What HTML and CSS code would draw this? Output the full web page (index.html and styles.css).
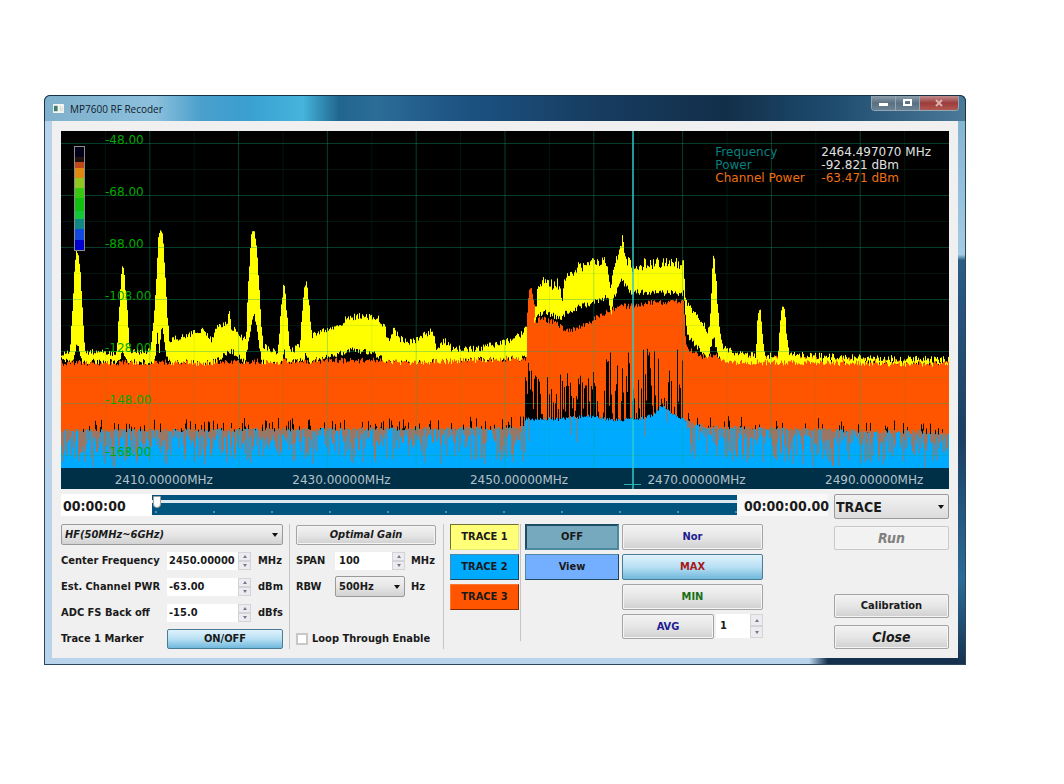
FILE: index.html
```html
<!DOCTYPE html>
<html lang="en">
<head>
	<meta charset="UTF-8">
	<title>MP7600 RF Recoder</title>
	<link rel="stylesheet" href="styles.css">
</head>
<body>
	<div class="window">
		<div class="titlebar">
			<svg class="app-icon" viewBox="0 0 12 10"><rect width="12" height="10" fill="#f4f6f2"/><rect x="1" y="2" width="4" height="6" fill="#3f7d6a"/><path d="M8 2v6M10 4v4" stroke="#c9d3c4"/></svg>
			<h1>MP7600 RF Recoder</h1>
			<div class="win-btns">
				<button type="button" aria-label="Minimize"><svg viewBox="0 0 12 10"><rect x="1" y="5" width="9" height="3" fill="#fff"/></svg></button>
				<button type="button" aria-label="Maximize"><svg viewBox="0 0 12 10"><rect x="2" y="2" width="7" height="5" fill="none" stroke="#fff" stroke-width="2"/></svg></button>
				<button type="button" class="win-close" aria-label="Close window"><svg viewBox="0 0 12 10"><path d="M3 2l6 6M9 2l-6 6" stroke="#e0b0b0" stroke-width="2"/></svg></button>
			</div>
		</div>

		<div class="client">
			<div class="plot">
				<svg class="spectrum" viewBox="0 0 888 337" preserveAspectRatio="none">
					<path id="orange" stroke="#ff5500"/>
					<path id="yellow" stroke="#ffff00"/>
					<path id="blue" stroke="#00aaff"/>
					<path id="mix" stroke="#ff5500" stroke-opacity=".6"/>
					<path id="minor" stroke="#00a060" stroke-opacity=".13"/>
					<path id="major" stroke="#10a878" stroke-opacity=".36"/>
				</svg>
				<ul class="axis-x">
					<li>2410.00000MHz</li>
					<li>2430.00000MHz</li>
					<li>2450.00000MHz</li>
					<li>2470.00000MHz</li>
					<li>2490.00000MHz</li>
				</ul>
				<ul class="axis-y">
					<li>-48.00</li>
					<li>-68.00</li>
					<li>-88.00</li>
					<li>-108.00</li>
					<li>-128.00</li>
					<li>-148.00</li>
					<li>-168.00</li>
				</ul>
				<div class="scale"></div>
				<div class="marker"></div>
				<dl class="readout">
					<dt>Frequency</dt><dd>2464.497070 MHz</dd>
					<dt>Power</dt><dd>-92.821 dBm</dd>
					<dt class="chp">Channel Power</dt><dd class="chp">-63.471 dBm</dd>
				</dl>
			</div>

			<div class="timeline">
				<span class="time">00:00:00</span>
				<input class="seek" type="range" min="0" max="100" value="0" aria-label="Position">
				<span class="time total">00:00:00.00</span>
				<div class="select big">
					<select aria-label="Mode"><option>TRACE</option></select>
				</div>
			</div>

			<div class="controls">
				<div class="panel input-panel">
					<div class="select full italic">
						<select aria-label="Input"><option>HF(50MHz~6GHz)</option></select>
					</div>
					<label for="cf">Center Frequency</label>
					<div class="spin"><input id="cf" type="number" step="any" value="2450.00000"><button type="button" aria-label="Up"></button><button type="button" class="down" aria-label="Down"></button></div>
					<span>MHz</span>
					<label for="pwr">Est. Channel PWR</label>
					<div class="spin"><input id="pwr" type="number" step="any" value="-63.00"><button type="button" aria-label="Up"></button><button type="button" class="down" aria-label="Down"></button></div>
					<span>dBm</span>
					<label for="adc">ADC FS Back off</label>
					<div class="spin"><input id="adc" type="number" step="any" value="-15.0"><button type="button" aria-label="Up"></button><button type="button" class="down" aria-label="Down"></button></div>
					<span>dBfs</span>
					<label for="mk">Trace 1 Marker</label>
					<button type="button" id="mk" class="btn on wide">ON/OFF</button>
				</div>

				<div class="panel span-panel">
					<button type="button" class="btn full italic">Optimal Gain</button>
					<label for="span">SPAN</label>
					<div class="spin"><input id="span" type="number" value="100"><button type="button" aria-label="Up"></button><button type="button" class="down" aria-label="Down"></button></div>
					<span>MHz</span>
					<label for="rbw">RBW</label>
					<div class="select">
						<select id="rbw"><option>500Hz</option></select>
					</div>
					<span>Hz</span>
					<label class="check"><input type="checkbox">Loop Through Enable</label>
				</div>

				<div class="panel trace-panel">
					<button type="button" class="flat t1">TRACE 1</button>
					<button type="button" class="flat t2">TRACE 2</button>
					<button type="button" class="flat t3">TRACE 3</button>
				</div>

				<div class="panel view-panel">
					<button type="button" class="flat off">OFF</button>
					<button type="button" class="flat view">View</button>
				</div>

				<div class="panel mode-panel">
					<button type="button" class="btn navy">Nor</button>
					<button type="button" class="btn on red">MAX</button>
					<button type="button" class="btn green">MIN</button>
					<div class="avg">
						<button type="button" class="btn navy">AVG</button>
						<div class="spin"><input type="number" value="1" aria-label="Average count"><button type="button" aria-label="Up"></button><button type="button" class="down" aria-label="Down"></button></div>
					</div>
				</div>

				<div class="panel action-panel">
					<button type="button" class="btn italic large" disabled>Run</button>
					<button type="button" class="btn calib">Calibration</button>
					<button type="button" class="btn italic large">Close</button>
				</div>
			</div>
		</div>
	</div>

	<script src="spectrum.js"></script>
</body>
</html>
```
FILE: styles.css
```css
*{
	padding: 0;
	margin: 0;
	box-sizing: border-box;
}
body {
	padding: 95px 98px 119px 44px;
	background: #fff;
	font: bold 11px/18px "DejaVu Sans Condensed", "DejaVu Sans", sans-serif;
	color: #1a1a1a;
}
ul {
	list-style: none;
}
button, input, select {
	font: inherit;
	color: inherit;
	min-width: 0;
}
.window {
	padding: 0 8px 7px 8px;
	border-radius: 6px 6px 0 0;
	background:
		linear-gradient(#7fb0d0 0, #a4cce4 28%, #2c5c84 29%, #1c3f63 60%, #2c6c98 85%, #16314e 100%) right / 8px 100% no-repeat,
		linear-gradient(90deg, #b9d4ea 0, #b9d4ea 83%, #16314e 85%, #16314e 100%);
	box-shadow: inset 0 0 0 1px #29475f;
}
.titlebar {
	display: flex;
	align-items: center;
	height: 26px;
	margin: 0 -8px;
	padding: 0 6px 0 8px;
	border: 1px solid #17324a;
	border-bottom: 0;
	border-radius: 6px 6px 0 0;
	background: linear-gradient(90deg, #7fb0cc 0, #8cc0dc 12%, #4a9fcc 17%, #3a9fd0 22%, #45b4dc 28%, #20668e 32%, #2c6c98 36%, #1c5484 45%, #173c60 60%, #122f4a 74%, #1f4d70 86%, #4a7a98 100%);
}
.app-icon {
	width: 11px;
	height: 9px;
}
.titlebar h1 {
	flex: 1;
	margin-left: 6px;
	font: 10px/24px "Open Sans", "Noto Sans", sans-serif;
	color: #10202c;
}
.win-btns {
	display: flex;
	align-self: flex-start;
	border: 1px solid #93a6b4;
	border-top: 0;
	border-radius: 0 0 4px 4px;
	overflow: hidden;
}
.win-btns button {
	width: 24px;
	height: 14px;
	border: 0;
	border-right: 1px solid #93a6b4;
	background: linear-gradient(#8e9fac, #5a7082 50%, #6b8294);
	line-height: 0;
}
.win-btns svg {
	width: 12px;
	height: 10px;
}
.win-btns .win-close {
	width: 38px;
	border-right: 0;
	background: linear-gradient(#c08c8c, #9c3c3c 50%, #b05850);
}
.client {
	padding: 10px 9px 9px;
	background: #f0f0f0;
}

/* spectrum */
.plot {
	position: relative;
	background: #000;
	font: 12px/14px "DejaVu Sans", sans-serif;
}
.spectrum {
	display: block;
	width: 100%;
	height: 337px;
	fill: none;
}
.axis-x {
	display: flex;
	height: 21px;
	line-height: 25px;
	background: #003048;
	color: #b4c0c8;
}
.axis-x li {
	flex: 1;
	padding-left: 28px;
	text-align: center;
}
.axis-y {
	position: absolute;
	left: 44px;
	top: 2px;
	color: #00a800;
}
.axis-y li {
	height: 52px;
}
.scale {
	position: absolute;
	left: 13px;
	top: 15px;
	width: 11px;
	height: 105px;
	border: 1px solid #8c8c8c;
	background: linear-gradient(#000018 0 10%, #201010 10% 15%, #c04818 15% 20%, #e08810 20% 30%, #90c820 30% 40%, #38c810 40% 50%, #10c010 50% 62%, #10c838 62% 70%, #108888 70% 80%, #1048e0 80% 90%, #0000d0 90%);
}
.marker {
	position: absolute;
	left: 64.3%;
	top: 0;
	bottom: 0;
	width: 2px;
	background: #30c8c8;
	opacity: .75;
}
.marker::after {
	content: "";
	position: absolute;
	left: -8px;
	bottom: 4px;
	width: 17px;
	height: 1px;
	background: #30e0d0;
}
.readout {
	position: absolute;
	top: 15px;
	right: 18px;
	display: grid;
	grid-template-columns: 106px auto;
	line-height: 13px;
	color: #e0e0e0;
}
.readout dt {
	color: #088080;
}
.readout .chp {
	color: #f07010;
}

/* time line */
.timeline {
	display: flex;
	align-items: flex-start;
	margin-top: 5px;
	height: 25px;
	font-size: 14px;
}
.time {
	width: 91px;
	height: 22px;
	padding-left: 2px;
	background: #fff;
	line-height: 24px;
}
.time.total {
	padding-left: 7px;
	background: #f8f8f8;
	white-space: nowrap;
}
.seek {
	flex: 1;
	height: 21px;
	appearance: none;
	background:
		repeating-linear-gradient(90deg, transparent 0 3px, #5590a8 3px 5px, transparent 5px 58px) 0 17px / 100% 2px no-repeat,
		linear-gradient(#f0f0f0 0 1px, #00557f 1px 6px, #dce8f0 6px 9px, #00557f 9px);
}
.seek::-webkit-slider-thumb {
	appearance: none;
	width: 8px;
	height: 12px;
	margin: 0 0 6px 1px;
	border: 1px solid #a0a0a0;
	border-radius: 1px 1px 4px 4px;
	background: #fff;
}

/* form parts */
.select {
	position: relative;
}
.select::after {
	content: "";
	position: absolute;
	right: 5px;
	top: 50%;
	margin-top: -2px;
	border: 3px solid transparent;
	border-top: 4px solid #111;
	border-bottom: 0;
	pointer-events: none;
}
.select select {
	display: block;
	width: 100%;
	height: 21px;
	padding-left: 3px;
	appearance: none;
	border: 1px solid #9a9a9a;
	border-radius: 2px;
	background: linear-gradient(#f2f2f2, #e6e6e6 50%, #d2d2d2);
}
.select.big {
	width: 115px;
	margin-left: 6px;
}
.select.big select {
	height: 25px;
	padding-left: 1px;
	background: linear-gradient(#f2f2f2, #dcdcdc);
}
.btn {
	height: 25px;
	border: 1px solid #a4a4a4;
	border-radius: 2px;
	background: linear-gradient(#f3f3f3, #e6e6e6 50%, #d0d0d0);
	box-shadow: inset 0 0 0 1px #f4f4f4;
}
.btn:disabled {
	border-color: #c8c8c8;
	background: #f2f2f2;
	color: #808080;
}
.btn.on {
	border-color: #4a7c98;
	background: linear-gradient(#e0f2fc, #b8e0f4 50%, #70b8dc);
	box-shadow: none;
}
.italic {
	font-style: italic;
}
.large {
	font-size: 14px;
}
.navy {
	color: #1c1c90;
}
.red {
	color: #a81818;
}
.green {
	color: #187018;
}
.spin {
	display: grid;
	grid-template-columns: 1fr 13px;
	grid-template-rows: 9px 9px;
}
.spin input {
	grid-row: span 2;
	width: 100%;
	padding-left: 2px;
	border: 0;
	background: #fff;
	appearance: textfield;
}
.spin input::-webkit-inner-spin-button {
	appearance: none;
}
.spin button {
	display: flex;
	align-items: center;
	justify-content: center;
	border: 1px solid #d4d4d8;
	background: #ececf0;
}
.spin button::before {
	content: "";
	border: 2px solid transparent;
	border-top: 0;
	border-bottom: 3px solid #70788c;
}
.spin .down::before {
	transform: rotate(180deg);
}

/* control panels */
.controls {
	display: flex;
	margin-top: 5px;
}
.panel {
	display: grid;
	align-content: start;
}
.full {
	grid-column: 1 / -1;
}
.input-panel, .span-panel {
	grid-template-rows: repeat(5, 21px);
	row-gap: 5px;
	align-items: center;
	padding-right: 6px;
	border-right: 1px solid #c4c4c4;
}
.input-panel {
	grid-template-columns: 106px 84px 25px;
	width: 229px;
}
.input-panel > span {
	padding-left: 7px;
	white-space: nowrap;
}
.input-panel .btn, .span-panel .btn {
	height: 20px;
}
.wide {
	grid-column: 2 / -1;
	margin-right: -7px;
}
.input-panel .full {
	margin-right: -7px;
}
.span-panel {
	grid-template-columns: 39px 70px 31px;
	padding-left: 6px;
	width: 154px;
}
.span-panel .spin input {
	padding-left: 4px;
}
.span-panel > span {
	padding-left: 6px;
}
.check {
	grid-column: 1 / -1;
	grid-row: 5;
	display: flex;
	align-items: center;
	white-space: nowrap;
}
.check input {
	width: 12px;
	height: 12px;
	margin-right: 4px;
	appearance: none;
	border: 2px solid #c8c8c8;
	background: #fff;
}
.trace-panel, .view-panel, .mode-panel {
	row-gap: 4px;
}
.trace-panel {
	width: 77px;
	height: 117px;
	padding: 0 1px 0 6px;
	border-right: 1px solid #c4c4c4;
}
.flat {
	height: 26px;
	border: 1px solid;
	border-color: #4c88a8 #204860 #204860 #4c88a8;
}
.t1 {
	border-color: #707030 #e8e870 #e8e870 #707030;
	background: #ffff78;
}
.t2 {
	background: #00aaff;
}
.t3 {
	border-color: #ff7730 #802a00 #802a00 #ff7730;
	background: #ff5500;
}
.view-panel {
	width: 98px;
	padding-left: 4px;
}
.off {
	border: 2px solid;
	border-color: #1c4c66 #4c88a0 #4c88a0 #1c4c66;
	background: #76a8be;
}
.view {
	background: #74aefe;
}
.mode-panel {
	width: 144px;
	padding-left: 3px;
}
.mode-panel > .btn {
	height: 26px;
}
.avg {
	display: grid;
	grid-template-columns: 92px 1fr;
	column-gap: 2px;
}
.avg .spin {
	grid-template-rows: 12px 12px;
}
.avg .spin input {
	padding-left: 4px;
}
.action-panel {
	width: 115px;
	margin-left: auto;
	padding-top: 2px;
	grid-template-rows: 68px 31px 24px;
}
.action-panel .btn {
	height: 24px;
}
```
FILE: spectrum.js
```js
// envelopes as x,y pairs
var yellowTop = [0,223, 9,220, 12,170, 14,132, 16,117, 19,134, 21,170, 24,220, 56,222, 58,180, 60,152, 61,128, 64,150, 67,184, 69,220, 90,219, 95,160, 97,112, 98,98, 102,106, 105,150, 106,180, 109,214, 111,208, 129,202, 144,199, 150,209, 157,195, 167,191, 168,170, 170,194, 179,203, 185,209, 187,160, 190,106, 193,98, 196,120, 199,170, 202,214, 217,221, 220,180, 223,148, 225,170, 229,220, 239,214, 242,170, 245,148, 248,170, 251,204, 269,197, 281,194, 284,187, 299,184, 317,187, 324,194, 327,211, 333,197, 339,207, 351,211, 359,206, 370,199, 372,202, 376,217, 383,208, 391,217, 414,217, 439,212, 459,204, 466,194, 473,190, 476,170, 477,150, 494,152, 496,149, 501,166, 505,144, 519,134, 539,130, 546,129, 550,154, 553,131, 557,124, 561,106, 565,127, 571,134, 589,131, 623,131, 624,169, 634,181, 647,199, 649,189, 652,128, 653,125, 655,144, 657,179, 661,214, 674,222, 695,224, 697,178, 700,182, 703,218, 705,224, 717,224, 720,180, 723,171, 726,204, 729,223, 789,226, 888,228]
var yellowLow = [0,229, 13,230, 15,215, 18,215, 20,230, 59,231, 62,218, 65,231, 94,231, 97,195, 98,228, 101,190, 104,215, 107,231, 150,232, 171,220, 184,231, 189,205, 193,180, 197,205, 201,231, 221,231, 223,218, 226,231, 243,230, 245,220, 248,231, 269,226, 289,219, 309,221, 324,229, 339,232, 464,227, 469,215, 475,185, 484,181, 501,188, 505,181, 539,169, 547,166, 550,184, 553,166, 561,149, 569,161, 589,162, 623,162, 626,204, 634,214, 647,226, 653,205, 657,227, 669,231, 888,233]
var orangeTop = [0,232, 465,228, 467,168, 470,155, 473,170, 476,197, 478,187, 494,191, 504,199, 514,199, 529,191, 539,184, 559,176, 589,172, 623,170, 625,216, 639,225, 888,232]
var blueTop = [0,300, 462,297, 464,288, 500,288, 530,285, 550,289, 575,288, 590,285, 602,275, 612,284, 625,290, 645,296, 888,302]

var seed = 7600
function rnd () {
	seed = (seed * 16807) % 2147483647
	return seed / 2147483647
}

function at (p, x) {
	for(var i = 0; i < p.length - 2; i += 2) {
		if(x <= p[i + 2]) {
			return p[i + 1] + (p[i + 3] - p[i + 1]) * (x - p[i]) / (p[i + 2] - p[i])
		}
	}
	return p[p.length - 1]
}

function line (x, y1, y2) {
	return 'M' + x + ' ' + y1.toFixed(1) + 'V' + y2.toFixed(1)
}

var yellow = '', orange = '', blue = '', mix = ''
for(var x = 0.5; x < 888; x++) {
	var inBand = x > 464 && x < 626
	var low = at(yellowLow, x) + rnd() * 6 - 3
	var high = at(yellowTop, x) + (rnd() - 0.4) * (inBand ? 12 : 7)
	if(high < low && (x < 466 || x > 473)) {
		yellow += line(x, high, low)
	}

	// bottom edge of the orange trace, ragged inside the channel
	var b = at(blueTop, x) + rnd() * 4 - 2
	var end = b + 2
	if(inBand) {
		var deep = x > 545 ? 70 : 45
		end = rnd() < 0.3 ? b : b - rnd() * deep
		if(x > 467 && x < 471) { end = 230 + rnd() * 30 }
	} else if(rnd() < 0.22) {
		end = b - rnd() * 11
	}
	orange += line(x, at(orangeTop, x) + rnd() * 6 - 3, end)
	blue += line(x, b, 337)

	// orange falling into the blue trace
	if(!inBand && rnd() < 0.8) {
		var d = rnd()
		mix += line(x, b, b + 6 + d * d * 30)
	} else if(inBand && rnd() < 0.06) {
		mix += line(x, b, b + rnd() * 30)
	}
}
document.querySelector('#yellow').setAttribute('d', yellow)
document.querySelector('#orange').setAttribute('d', orange)
document.querySelector('#blue').setAttribute('d', blue)
document.querySelector('#mix').setAttribute('d', mix)

// grid
var major = '', minor = ''
for(var i = 0; i < 10; i++) {
	if(i > 0) {
		major += 'M' + i * 88.8 + ' 0V337'
	}
	minor += 'M' + (i * 88.8 + 44.4) + ' 0V337'
}
for(var j = 0; j < 7; j++) {
	major += 'M0 ' + (12.5 + j * 52) + 'H888'
	minor += 'M0 ' + (38.5 + j * 52) + 'H888'
}
document.querySelector('#major').setAttribute('d', major)
document.querySelector('#minor').setAttribute('d', minor)
```
